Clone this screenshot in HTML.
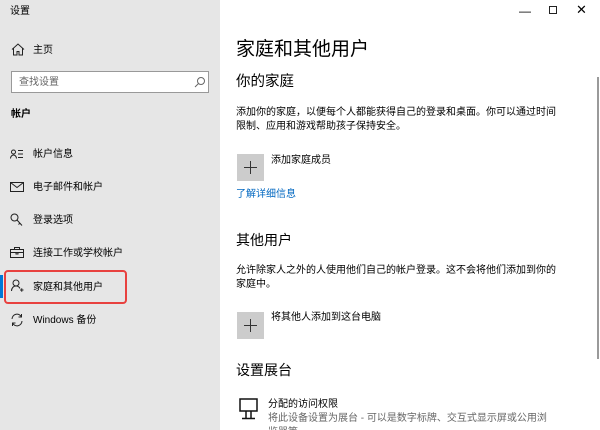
<!DOCTYPE html>
<html style="overflow:hidden;height:430px"><head><meta charset="utf-8"><style>
*{margin:0;padding:0;box-sizing:border-box}
body{width:600px;height:430px;overflow:hidden;background:#fff;font-family:"Liberation Sans","Noto Sans CJK SC",sans-serif;color:#000;position:relative}
.side{position:absolute;left:0;top:0;width:220px;height:430px;background:#e6e6e6}
.a{position:absolute;white-space:nowrap;line-height:1}
.s12{font-size:10px}
.ic{position:absolute}
.tile{position:absolute;width:27px;height:27px;background:#cccccc}
.tile:before{content:"";position:absolute;left:7px;top:13px;width:13px;height:1px;background:#333}
.tile:after{content:"";position:absolute;left:13px;top:7px;width:1px;height:13px;background:#333}
</style></head><body>
<div class="side">
<div class="a" style="left:10px;top:7px;font-size:10px">设置</div>
<svg class="ic" style="left:11px;top:43px" width="14" height="13" viewBox="0 0 14 13" fill="none" stroke="#222" stroke-width="1"><path d="M1 6.5L7 1l6 5.5M2.5 5v7h3.5V8.5h2V12h3.5V5"/></svg>
<div class="a s12" style="left:33px;top:46px">主页</div>
<div style="position:absolute;left:11px;top:71px;width:198px;height:22px;border:1px solid #999;background:#fff"></div>
<div class="a s12" style="left:19px;top:78px;color:#666">查找设置</div>
<svg class="ic" style="left:194px;top:76px" width="12" height="12" viewBox="0 0 12 12" fill="none" stroke="#666"><circle cx="7" cy="5" r="3.5"/><path d="M4.5 7.5L1 11"/></svg>
<div class="a s12" style="left:11px;top:110px;font-weight:bold">帐户</div>
<svg class="ic" style="left:10px;top:149px" width="14" height="10" viewBox="0 0 14 10" fill="none" stroke="#222"><circle cx="3.5" cy="3" r="2"/><path d="M0.5 9.5c0-2 1.5-3.5 3-3.5s3 1.5 3 3.5M8 1.5h5M8 5h5M8 8.5h5"/></svg>
<div class="a s12" style="left:33px;top:150px">帐户信息</div>
<svg class="ic" style="left:10px;top:182px" width="14" height="10" viewBox="0 0 14 10" fill="none" stroke="#222"><rect x=".5" y=".5" width="13" height="9"/><path d="M.5 .5L7 5.5 13.5 .5"/></svg>
<div class="a s12" style="left:33px;top:183px">电子邮件和帐户</div>
<svg class="ic" style="left:10px;top:213px" width="13" height="14" viewBox="0 0 13 14" fill="none" stroke="#222"><circle cx="4.5" cy="4.5" r="3.5"/><path d="M7 7l5 5.5M10 10l-1.5 1.5"/></svg>
<div class="a s12" style="left:33px;top:216px">登录选项</div>
<svg class="ic" style="left:10px;top:247px" width="14" height="11" viewBox="0 0 14 11" fill="none" stroke="#222"><rect x=".5" y="2.5" width="13" height="8"/><path d="M4.5 2.5V.5h5v2M.5 5.5h13M6 5.5v1.5h2V5.5"/></svg>
<div class="a s12" style="left:33px;top:249px">连接工作或学校帐户</div>
<div style="position:absolute;left:0;top:275px;width:3px;height:23px;background:#0078d7"></div>
<svg class="ic" style="left:11px;top:279px" width="13" height="14" viewBox="0 0 13 14" fill="none" stroke="#222"><circle cx="5" cy="4" r="3"/><path d="M.5 12c0-3 2-5 4.5-5s3.5 1.5 4 2.5M9 11h3.5M10.75 9.3v3.4"/></svg>
<div class="a s12" style="left:33px;top:283px">家庭和其他用户</div>
<div style="position:absolute;left:4px;top:270px;width:123px;height:34px;border:2px solid #e8413f;border-radius:4px"></div>
<svg class="ic" style="left:10px;top:313px" width="14" height="14" viewBox="0 0 14 14" fill="none" stroke="#222"><path d="M2 6A5 5 0 0 1 11.5 4M12 8A5 5 0 0 1 2.5 10M11.5 1v3h-3M2.5 13v-3h3"/></svg>
<div class="a s12" style="left:33px;top:316px">Windows 备份</div>
</div>
<div class="a" style="left:519px;top:5px;font-size:12px">—</div>
<div style="position:absolute;left:549px;top:6px;width:8px;height:8px;border:1px solid #222"></div>
<div class="a" style="left:576px;top:3px;font-size:13px">✕</div>
<div style="position:absolute;left:597px;top:77px;width:2px;height:282px;background:#9a9a9a"></div>
<div class="a" style="left:236px;top:40px;font-size:19px">家庭和其他用户</div>
<div class="a" style="left:236px;top:75px;font-size:14.5px">你的家庭</div>
<div class="a" style="left:236px;top:106px;line-height:14px;font-size:10px">添加你的家庭，以便每个人都能获得自己的登录和桌面。你可以通过时间<br>限制、应用和游戏帮助孩子保持安全。</div>
<div class="tile" style="left:237px;top:154px"></div>
<div class="a" style="left:271px;top:156px;font-size:10px">添加家庭成员</div>
<div class="a" style="left:236px;top:190px;font-size:10px;color:#0067c0">了解详细信息</div>
<div class="a" style="left:236px;top:233px;font-size:14px">其他用户</div>
<div class="a" style="left:236px;top:264px;line-height:14px;font-size:10px">允许除家人之外的人使用他们自己的帐户登录。这不会将他们添加到你的<br>家庭中。</div>
<div class="tile" style="left:237px;top:312px"></div>
<div class="a" style="left:271px;top:313px;font-size:10px">将其他人添加到这台电脑</div>
<div class="a" style="left:236px;top:363px;font-size:14px">设置展台</div>
<svg class="ic" style="left:239px;top:398px" width="20" height="22" viewBox="0 0 20 22" fill="none" stroke="#111" stroke-width="1.5"><rect x="1" y="1" width="17" height="12"/><path d="M7 13v7M12 13v7M3 20.5h13"/></svg>
<div class="a" style="left:268px;top:400px;font-size:10px">分配的访问权限</div>
<div class="a" style="left:268px;top:414px;font-size:10px;color:#666">将此设备设置为展台 - 可以是数字标牌、交互式显示屏或公用浏</div>
<div class="a" style="left:268px;top:428px;font-size:10px;color:#666">览器等</div>
</body></html>
